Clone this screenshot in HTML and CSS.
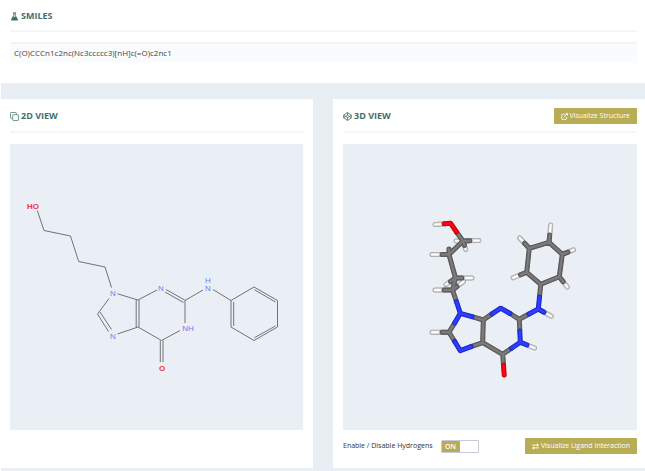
FILE: index.html
```html
<!DOCTYPE html>
<html lang="en">
<head>
<meta charset="utf-8">
<title>Molecule viewer</title>
<link rel="stylesheet" href="styles.css">
</head>
<body>
<main class="page">
  <section class="panel panel-smiles">
    <header class="panel-head">
      <svg class="icon" viewBox="0 0 10 10" aria-hidden="true"><path d="M3.4 1h3.2M4.1 1v3L1.6 8.7h6.8L5.9 4V1" fill="none" stroke="currentColor" stroke-width="1"/><path d="M3.2 5.2h3.6l2.2 4H1z" fill="currentColor"/></svg>
      <h2>SMILES</h2>
    </header>
    <p class="smiles">C(O)CCCn1c2nc(Nc3ccccc3)[nH]c(=O)c2nc1</p>
  </section>
  <div class="views">
    <section class="panel panel-2d">
      <header class="panel-head">
        <svg class="icon" viewBox="0 0 10 10" aria-hidden="true"><g fill="none" stroke="currentColor" stroke-width=".8"><path d="M7 2.7V1.3q0-.7-.7-.7h-5q-.7 0-.7.7v5q0 .7.7.7h1.4"/><rect x="3" y="3" width="6.4" height="6.4" rx=".7"/></g></svg>
        <h2>2D VIEW</h2>
      </header>
      <svg class="canvas" viewBox="10 144 293 286" role="img" aria-label="2D structure">
        <g class="bonds">
          <path d="M37.3 210.5 44 230.5 70.5 236 78.7 261.5 105 267 111.5 287.5"/>
          <path d="M117.5 293.8 138 300M109 298.5 97.5 314M97.5 314 108.5 331.5M100 312 111.5 329.5M117.5 334 138 327M136.2 300V327M139 300V327"/>
          <path d="M138 300 157 290M138 327 161.5 340.5 180 330.5M185 323V301M166 289.5 185.5 300.5M165 292 183.5 302.5M160.3 340.5V362M163 340.5V362"/>
          <path d="M185 300.5 203 290M213 289.5 231 300.5V327L254 340.5 277.5 327V300.5L254 287 231 300.5M233.7 302V326M254.5 289.8 275.5 302M275.5 326 254.5 337.7"/>
        </g>
        <g class="atoms">
          <text class="oxygen" x="33" y="209">HO</text>
          <text x="113" y="296">N</text>
          <text x="113" y="339">N</text>
          <text x="161" y="291">N</text>
          <text x="208" y="291">N</text>
          <text x="208" y="283">H</text>
          <text x="188" y="331">NH</text>
          <text class="oxygen" x="162" y="371">O</text>
        </g>
      </svg>
    </section>
    <section class="panel panel-3d">
      <header class="panel-head">
        <svg class="icon" viewBox="0 0 10 10" aria-hidden="true"><path d="M5 .6 9.300 3.500v3L5 9.400.7 6.500v-3zM5 .6v3M5 6.400v3M.7 3.500 5 6.400 9.300 3.500M.7 6.500 5 3.600 9.300 6.500" fill="none" stroke="currentColor" stroke-width=".9" stroke-linejoin="round"/></svg>
        <h2>3D VIEW</h2>
        <button class="btn" type="button"><svg class="btn-icon" viewBox="0 0 10 10" aria-hidden="true"><path d="M5.500 2H1.800Q1 2 1 2.800v5.400q0 .8.800.8h5.400q.8 0 .8-.8V6M4 6 8.500 1.500" fill="none" stroke="currentColor" stroke-width="1.200"/><path d="M6 .5h3.800v3.800z" fill="currentColor"/></svg>Visualize Structure</button>
      </header>
      <svg class="canvas" viewBox="343 144 294 286" role="img" aria-label="3D structure">
        <defs>
          <path id="tail-h" d="M456 240.900 479 240.500M463 241 465.700 249.500M449 254.500H432M455.500 278H472M455.500 278 446 284.500M452.500 290H435M452.500 290 463.500 281.500M446 223.700 435 224.500"/>
          <path id="ring-h" d="M549 242.300 550.700 225M529.300 248.300 519.700 238M562.300 254.300 573.500 249.900M559.300 276.700 567.300 287M526.700 272.300 513.200 277.800M538.300 309 551.300 316.300M520.300 342.300 534.500 348M449 332.300H432"/>
          <path id="carbon" d="M456.500 232 463 241 449 254.500 455.500 278 452.500 290 456.500 301.700M463 241 470 240.700M463 241 464.500 245.500M449 254.500H442M449 254.500V249M452.500 290H444M455.500 278H462M455.500 278 450.500 281.500M452.500 290 457 286.500M472 316.700 483.300 320 482.700 342.700 471 346.700M483.300 320 492 313.900M510 313.500 519.300 319.300 519.800 331M519.300 319.300 529 314M482.700 342.700 502.700 354.300 511.500 348.300M502.700 354.300 503.500 365M454.700 323 449 332.300 454.700 341.500M449 332.300H442M539.500 297 540.700 284.300 559.300 276.700 562.300 254.300 549 242.300 529.300 248.300 526.700 272.300 540.700 284.300M549 242.300 549.700 235M529.300 248.300 524.500 243.200M562.300 254.300 568 252.100M559.300 276.700 563.200 281.700M526.700 272.300 520.500 274.800"/>
          <path id="nitrogen" d="M456.500 301.700 460.300 313.300 472 316.700M460.300 313.300 454.700 323M454.700 341.500 460.300 350.700 471 346.700M492 313.900 500.700 308.200 510 313.500M529 314 538.300 309 539.500 297M538.300 309 544 312.200M519.800 331 520.300 342.300 511.500 348.300M520.300 342.300 527 345"/>
          <path id="oxygen" d="M456.500 232 450.500 223.200 444 223.800M503.500 365 504.200 375"/>
        </defs>
        <g class="sticks">
          <g class="h"><use href="#tail-h" class="edge"/><use href="#tail-h" class="body"/><use href="#tail-h" class="shine"/><use href="#ring-h" class="edge"/><use href="#ring-h" class="body"/><use href="#ring-h" class="shine"/></g>
          <g class="c"><use href="#carbon" class="edge"/><use href="#carbon" class="body"/><use href="#carbon" class="shine"/></g>
          <g class="n"><use href="#nitrogen" class="edge"/><use href="#nitrogen" class="body"/><use href="#nitrogen" class="shine"/></g>
          <g class="o"><use href="#oxygen" class="edge"/><use href="#oxygen" class="body"/><use href="#oxygen" class="shine"/></g>
        </g>
      </svg>
      <footer class="panel-foot">
        <label class="toggle-label" for="hydrogens">Enable / Disable Hydrogens</label>
        <input class="toggle" id="hydrogens" type="checkbox" checked>
        <button class="btn" type="button"><svg class="btn-icon" viewBox="0 0 10 10" aria-hidden="true"><path d="M0 3h8M2 7h8" stroke="currentColor" stroke-width="1.300"/><path d="M7 .5 10 3 7 5.500zM3 4.500 0 7l3 2.500z" fill="currentColor"/></svg>Visualize Ligand Interaction</button>
      </footer>
    </section>
  </div>
</main>
</body>
</html>
```
FILE: styles.css
```css
* { box-sizing: border-box; }

body {
  margin: 0;
  background: #fff;
  color: #444;
  font: 8px/12px "Open Sans", sans-serif;
}

.page {
  min-height: 100vh;
  margin-left: 1px;
  background: #e9eef5;
}

.panel {
  background: #fff;
  padding: 0 8px 0 10px;
}

.panel-smiles {
  padding: 0 8px 10px 9px;
}

.panel-2d { padding: 0 10px 0 9px; }

.panel-head {
  display: flex;
  align-items: center;
  gap: 2px;
  height: 34px;
  padding-top: 2px;
  border-bottom: 2px solid #f4f6f7;
  color: #3f7069;
}

.panel-smiles .panel-head { height: 32px; }

.panel-head h2 {
  margin: 0;
  font-size: 9px;
  font-weight: 700;
  line-height: 12px;
}

.icon {
  width: 9px;
  height: 9px;
}

.smiles {
  margin: 10px 0;
  padding: 3px 4px 4px;
  border-top: 2px solid #f2f5f8;
  background: #fafbfd;
}

.views {
  display: grid;
  grid-template-columns: 1fr 1fr;
  gap: 20px;
  padding: 16px 0 3px;
}

.canvas {
  display: block;
  width: 100%;
  margin-top: 11px;
  background: #eaeff6;
}

.btn {
  display: flex;
  align-items: center;
  gap: 2px;
  margin-left: auto;
  padding: 2px 7px;
  border: 0;
  border-radius: 1px;
  background: #b8ac55;
  color: #fff;
  font: 500 7px/12px "Open Sans", sans-serif;
}

.btn-icon {
  width: 7px;
  height: 7px;
}

.panel-foot {
  display: flex;
  align-items: center;
  height: 38px;
  padding-bottom: 6px;
}

.toggle-label {
  color: #333;
  font-size: 7px;
}

.toggle {
  appearance: none;
  width: 38px;
  height: 13px;
  margin: 0 0 0 8px;
  border: 1px solid #c6cbdb;
  border-radius: 1px;
  background: #fff;
}

.toggle:checked::before {
  content: "ON";
  display: block;
  width: 50%;
  background: #b8ac55;
  color: #fff;
  font: 600 7px/11px "Open Sans", sans-serif;
  text-align: center;
}

.bonds {
  fill: none;
  stroke: #707376;
  stroke-width: 1;
}

.atoms {
  fill: #7676f5;
  font: 8px "Liberation Sans", sans-serif;
  text-anchor: middle;
}

.atoms .oxygen {
  fill: #ed3545;
  font-weight: 700;
}

.sticks {
  fill: none;
  stroke-linecap: round;
  stroke-linejoin: round;
}

.edge { stroke-width: 5; }
.body { stroke-width: 4; }
.shine { stroke-width: 2; }

.h .edge { stroke: #9a9a9c; }
.h .body { stroke: #c8c8c8; }
.h .shine { stroke: #fff; }
.c .edge { stroke: #555; }
.c .body { stroke: #626262; }
.c .shine { stroke: #7c7c7c; }
.n .edge { stroke: #2226bd; }
.n .body { stroke: #2030e8; }
.n .shine { stroke: #3040ff; }
.o .edge { stroke: #b80d16; }
.o .body { stroke: #e0000c; }
.o .shine { stroke: #f80a16; }
```
